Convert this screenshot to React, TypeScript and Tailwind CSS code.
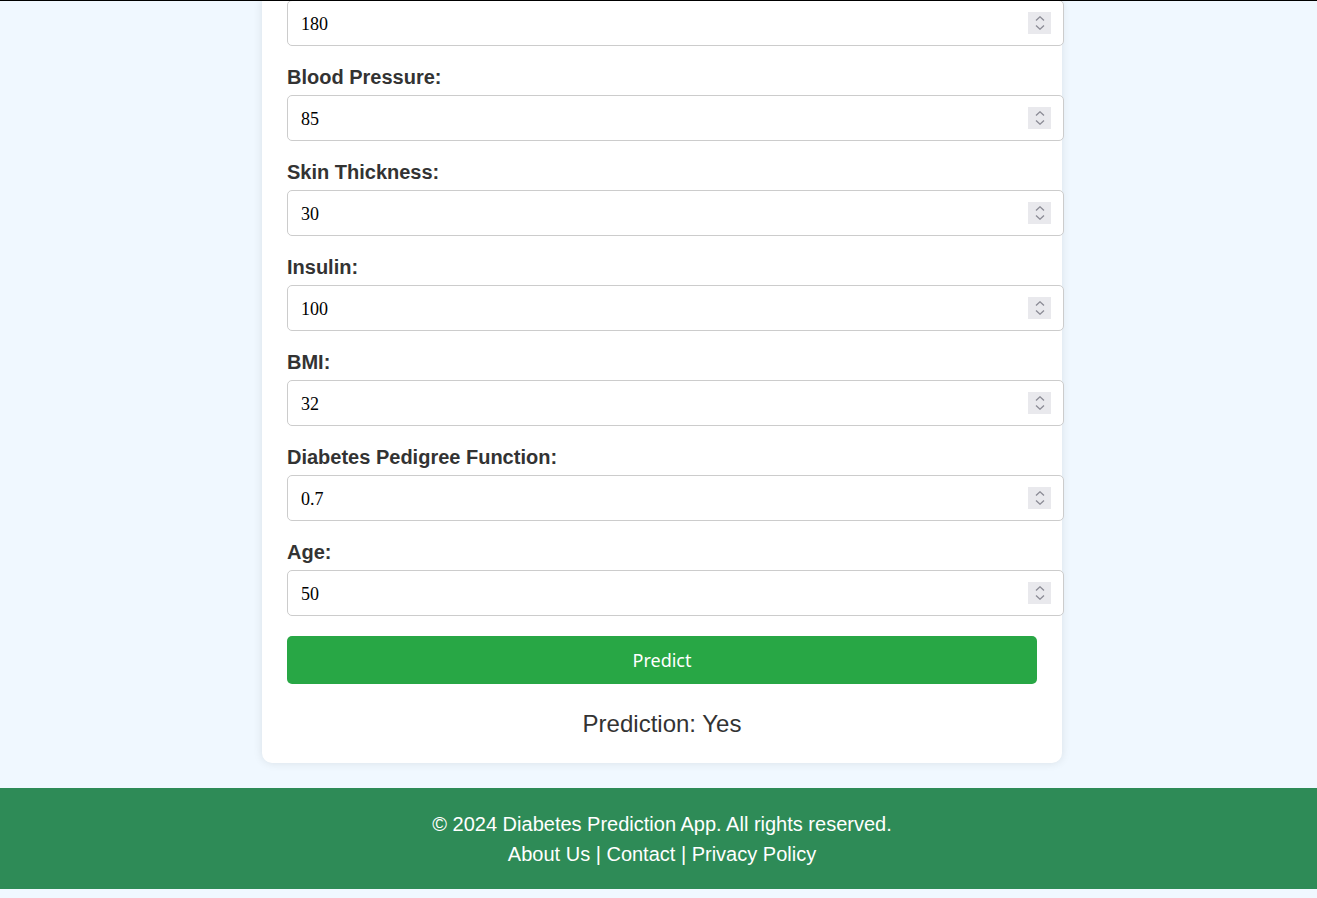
import React, { FC } from "react";

const fields = [
  { label: "Blood Pressure:", value: "85" },
  { label: "Skin Thickness:", value: "30" },
  { label: "Insulin:", value: "100" },
  { label: "BMI:", value: "32" },
  { label: "Diabetes Pedigree Function:", value: "0.7" },
  { label: "Age:", value: "50" },
];

const NumberBox: FC<{ value: string }> = ({ value }) => {
  return (
    <div className="relative mb-[20px] w-[777px]">
      <input
        type="text"
        readOnly
        value={value}
        className="block w-full h-[46px] pl-[13px] pr-[12px] pt-[2px] border border-[#cccccc] rounded-[5px] bg-white text-black text-[18px] outline-none"
        style={{ fontFamily: '"Liberation Serif", serif' }}
      />
      {/* spinner */}
      <div className="absolute right-[13px] top-[12px] w-[23px] h-[22px] bg-[#e9e9ed] flex flex-col items-center justify-center gap-[4px]">
        <svg width="10" height="5" viewBox="0 0 10 5" fill="none">
          <path d="M1 4.5L5 0.8L9 4.5" stroke="#8b8b95" strokeWidth="1.3" />
        </svg>
        <svg width="10" height="5" viewBox="0 0 10 5" fill="none">
          <path d="M1 0.5L5 4.2L9 0.5" stroke="#8b8b95" strokeWidth="1.3" />
        </svg>
      </div>
    </div>
  );
};

const App: FC = () => {
  return (
    <div className="min-h-screen bg-[#f0f8ff] font-['Liberation_Sans',Arial,sans-serif]">
      <div className="relative z-10 h-px bg-black"></div>
      <div className="flex justify-center pl-[7px] -mt-px">
        <div className="w-[800px] bg-white rounded-b-[10px] shadow-[0_0_10px_rgba(0,0,0,0.1)] px-[25px] pb-[25px]">
          <NumberBox value="180" />
          {fields.map((f) => (
            <div key={f.label}>
              <label className="block mb-[6px] text-[20px] font-bold text-[#333333] leading-[23px]">
                {f.label}
              </label>
              <NumberBox value={f.value} />
            </div>
          ))}
          <button className="w-[750px] h-[48px] bg-[#28a745] text-white rounded-[5px] text-[18px] font-['Noto_Sans',sans-serif]">
            Predict
          </button>
          <p className="mt-[26px] text-center text-[24px] leading-[28px] text-[#333333]">
            Prediction: Yes
          </p>
        </div>
      </div>
      <footer className="mt-[25px] bg-[#2e8b57] text-white text-center pt-[21px] pb-[20px] pl-[7px] text-[20px] leading-[30px]">
        <p>© 2024 Diabetes Prediction App. All rights reserved.</p>
        <p>About Us | Contact | Privacy Policy</p>
      </footer>
      <div className="h-[9px]"></div>
    </div>
  );
};

export default App;
